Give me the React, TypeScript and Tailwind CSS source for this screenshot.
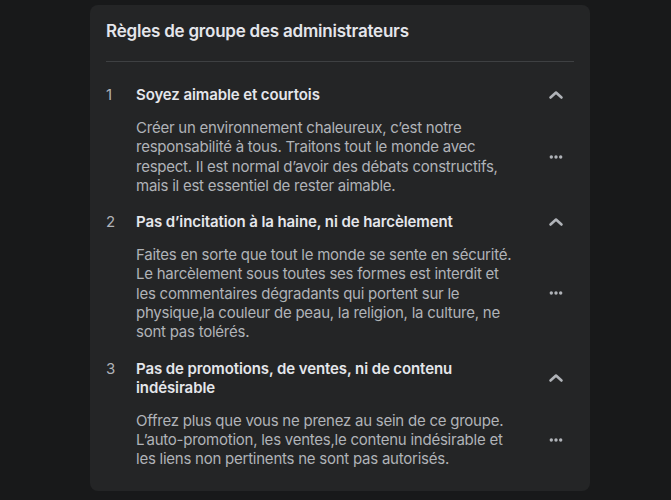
const rules = [
  {
    n: "1",
    title: "Soyez aimable et courtois",
    body: "Créer un environnement chaleureux, c’est notre responsabilité à tous. Traitons tout le monde avec respect. Il est normal d’avoir des débats constructifs, mais il est essentiel de rester aimable.",
  },
  {
    n: "2",
    title: "Pas d’incitation à la haine, ni de harcèlement",
    body: "Faites en sorte que tout le monde se sente en sécurité. Le harcèlement sous toutes ses formes est interdit et les commentaires dégradants qui portent sur le physique,la couleur de peau, la religion, la culture, ne sont pas tolérés.",
  },
  {
    n: "3",
    title: "Pas de promotions, de ventes, ni de contenu indésirable",
    body: "Offrez plus que vous ne prenez au sein de ce groupe. L’auto-promotion, les ventes,le contenu indésirable et les liens non pertinents ne sont pas autorisés.",
  },
];

function Chevron() {
  return (
    <svg width="16" height="10" viewBox="0 0 16 10" fill="none">
      <path d="M2.5 7.5 L8 2.5 L13.5 7.5" stroke="#b0b3b8" strokeWidth="2.6" strokeLinecap="round" strokeLinejoin="round" />
    </svg>
  );
}

function Dots() {
  return (
    <svg width="16" height="6" viewBox="0 0 16 6" fill="#b0b3b8">
      <circle cx="3.3" cy="3" r="1.7" />
      <circle cx="8" cy="3" r="1.7" />
      <circle cx="12.7" cy="3" r="1.7" />
    </svg>
  );
}

export default function App() {
  return (
    <div className="min-h-[500px] bg-[#18191a] pt-[5px] font-['Inter',sans-serif]">
      <div className="ml-[90px] w-[500px] rounded-lg bg-[#242526] px-4 pt-[15px] pb-[22px]">
        <h2 className="text-[17px] leading-[22px] font-semibold tracking-[-0.22px] text-[#e4e6eb]">
          Règles de groupe des administrateurs
        </h2>
        <div className="mt-[19px] mb-[23px] h-px bg-[#3e4042]" />

        <div className="flex flex-col gap-[17px]">
          {rules.map((r) => (
            <div key={r.n} className="flex flex-col gap-[14px]">
              <div className="flex items-center">
                <div className="flex w-[30px] self-start text-[15px] leading-[19px] text-[#b0b3b8]">
                  {r.n}
                </div>
                <div className="w-[380px] text-[15px] leading-[19px] font-semibold tracking-[-0.1px] text-[#e4e6eb]">
                  {r.title}
                </div>
                <div className="flex-1" />
                <div className="flex w-9 justify-center">
                  <Chevron />
                </div>
              </div>
              <div className="flex items-center">
                <div className="w-[30px]" />
                <p className="w-[380px] text-[15px] leading-[19.3px] tracking-[-0.24px] text-[#b0b3b8]">{r.body}</p>
                <div className="flex-1" />
                <div className="flex w-9 justify-center">
                  <Dots />
                </div>
              </div>
            </div>
          ))}
        </div>
      </div>
    </div>
  );
}
